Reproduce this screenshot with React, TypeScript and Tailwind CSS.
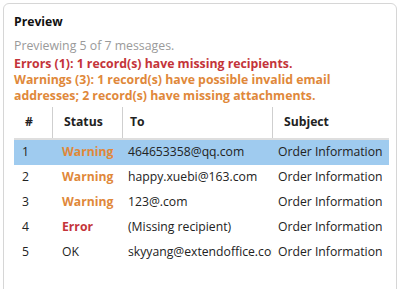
const rows = [
  { n: '1', status: 'Warning', to: '464653358@qq.com', subject: 'Order Information', selected: true },
  { n: '2', status: 'Warning', to: 'happy.xuebi@163.com', subject: 'Order Information' },
  { n: '3', status: 'Warning', to: '123@.com', subject: 'Order Information' },
  { n: '4', status: 'Error', to: '(Missing recipient)', subject: 'Order Information' },
  { n: '5', status: 'OK', to: 'skyyang@extendoffice.com', subject: 'Order Information' },
];

function statusClass(s: string) {
  if (s === 'Warning') return 'font-bold text-[#e0883a]';
  if (s === 'Error') return 'font-bold text-[#c4343a]';
  return 'text-[#222]';
}

export default function App() {
  return (
    <div className="w-[400px] h-[289px] bg-white overflow-hidden pt-[3px] px-[3px] font-['Open_Sans',sans-serif]">
      <div className="h-[300px] border border-[#d6d6d6] rounded-[6px] pl-[10px] pr-[7px] pt-[9px]">
        <h2 className="text-[12.2px] font-bold text-[#111] leading-[18px]">Preview</h2>
        <p className="mt-[6px] text-[12.3px] leading-[17px] text-[#9a9a9a]">Previewing 5 of 7 messages.</p>
        <p className="mt-[1px] text-[12.3px] leading-[17px] font-bold text-[#c4343a]">
          Errors (1): 1 record(s) have missing recipients.
        </p>
        <p className="w-[375px] text-[12.3px] leading-[16px] font-bold text-[#e0883a]">
          Warnings (3): 1 record(s) have possible invalid email addresses; 2 record(s) have missing attachments.
        </p>

        <div className="mt-[3px] w-[375px] text-[12.2px] text-[#222]">
          <div className="grid grid-cols-[38px_70px_150px_117px] h-[33px] items-center border-b-[2px] border-[#dedede]">
            <div className="h-full flex items-center pl-[11px] font-bold">#</div>
            <div className="h-full flex items-center pl-[11px] font-bold border-l border-[#cfcfcf]">Status</div>
            <div className="h-full flex items-center pl-[7px] font-bold border-l border-[#cfcfcf]">To</div>
            <div className="h-full flex items-center pl-[11px] font-bold border-l border-[#cfcfcf]">Subject</div>
          </div>
          {rows.map((r) => (
            <div
              key={r.n}
              className={`grid grid-cols-[38px_70px_150px_117px] h-[25px] items-center whitespace-nowrap ${
                r.selected ? 'bg-[#9fcbef]' : ''
              }`}
            >
              <div className="pl-[8px]">{r.n}</div>
              <div className={`pl-[10px] ${statusClass(r.status)}`}>{r.status}</div>
              <div className="pl-[6px] overflow-hidden">{r.to}</div>
              <div className="pl-[6px] overflow-hidden">{r.subject}</div>
            </div>
          ))}
        </div>
      </div>
    </div>
  );
}
